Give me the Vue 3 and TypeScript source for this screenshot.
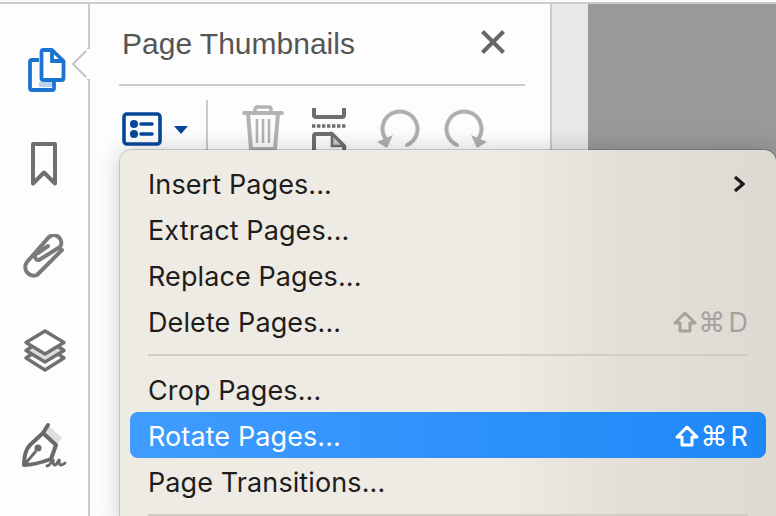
<script setup lang="ts">
interface MenuItem {
  label: string
  keyName?: string
  disabled?: boolean
  active?: boolean
  submenu?: boolean
}
const groupOne: MenuItem[] = [
  { label: 'Insert Pages...', submenu: true },
  { label: 'Extract Pages...' },
  { label: 'Replace Pages...' },
  { label: 'Delete Pages...', keyName: 'D', disabled: true },
]
const groupTwo: MenuItem[] = [
  { label: 'Crop Pages...' },
  { label: 'Rotate Pages...', keyName: 'R', active: true },
  { label: 'Page Transitions...' },
]
const groups = [groupOne, groupTwo]
</script>

<template>
  <div class="frame">
    <aside class="rail">
      <svg class="rail-icon" viewBox="0 0 48 48">
        <rect x="18" y="36" width="14" height="5" fill="#bcd2ec" />
        <path d="M18 14H11a2 2 0 0 0-2 2V42a2 2 0 0 0 2 2H31a2 2 0 0 0 2-2V36" fill="none" stroke="#1b74d0" stroke-width="3.8" stroke-linejoin="round" />
        <path d="M20.500 6a2 2 0 0 1 2-2H31L42.500 15V32a2 2 0 0 1-2 2H22.500a2 2 0 0 1-2-2Z" fill="#fff" stroke="#1b74d0" stroke-width="3.8" stroke-linejoin="round" />
        <path d="M31 4V15H42.500" fill="none" stroke="#1b74d0" stroke-width="3.800" />
      </svg>
      <svg class="rail-icon" viewBox="0 0 48 48">
        <path d="M12 4H34V43.500L23 32.500L12 43.500Z" fill="none" stroke="#707070" stroke-width="4" stroke-linejoin="round" />
      </svg>
      <svg class="rail-icon" viewBox="0 0 48 48">
        <path transform="translate(1 -3)" d="M40 19L15 44A8.500 8.500 0 0 1 5 31L27 6A7.500 7.500 0 0 1 38 16L17 29A3.500 3.500 0 0 1 16 22L26 15" fill="none" stroke="#7a7a7a" stroke-width="4" stroke-linecap="round" />
      </svg>
      <svg class="rail-icon" viewBox="0 0 48 48">
        <path d="M11 18.500L5 22.500L24 34L43 22.500L37 18.500L24 26Z" fill="#dcdcdc" />
        <path d="M11 26L5 30L24 42L43 30L37 26" fill="none" stroke="#707070" stroke-width="3.400" stroke-linejoin="round" />
        <path d="M11 18.500L5 22.500L24 34L43 22.500L37 18.500" fill="none" stroke="#707070" stroke-width="3.400" stroke-linejoin="round" />
        <path d="M24 3L43 14.500L24 26L5 14.500Z" fill="#fff" stroke="#707070" stroke-width="3.400" stroke-linejoin="round" />
      </svg>
      <svg class="rail-icon" viewBox="0 0 48 48">
        <path d="M27 3L41 16L35 23L22 11Z" fill="#dedede" />
        <path d="M3 43C3 35 5 27 9 23L22 11L35 23L30 37C22 40 12 43 3 43Z" fill="none" stroke="#6a6a6a" stroke-width="4" stroke-linejoin="round" />
        <path d="M22 11L27 3" stroke="#6a6a6a" stroke-width="4" stroke-linecap="round" />
        <path d="M4 42L15 29" stroke="#6a6a6a" stroke-width="2.800" />
        <circle cx="17" cy="26" r="3.500" fill="#6a6a6a" />
        <path d="M26 44C29 44 31 38 32 38C33 38 31 43 34 43C36 43 37 38 38 38C39 38 37 43 40 43C42 43 43 42 44 41" fill="none" stroke="#6a6a6a" stroke-width="2.800" stroke-linecap="round" />
      </svg>
      <svg class="notch" viewBox="0 0 20 36">
        <path d="M19 0L3 16L19 32" fill="#fdfdfd" stroke="#c4c4c4" stroke-width="2" />
        <path d="M18 1V31" stroke="#fdfdfd" stroke-width="4" />
      </svg>
    </aside>

    <section class="panel">
      <header class="panel-head">
        <h1 class="panel-title">Page Thumbnails</h1>
        <svg class="close" viewBox="0 0 26 26">
          <path d="M2.500 2.500L23.500 23.500M23.500 2.500L2.500 23.500" stroke="#666" stroke-width="4" />
        </svg>
      </header>
      <div class="tools">
        <svg class="tool list" viewBox="0 0 42 36">
          <rect x="3" y="3" width="36" height="30" rx="3" fill="none" stroke="#07479a" stroke-width="3.600" />
          <circle cx="13" cy="13" r="4" fill="#07479a" />
          <circle cx="13" cy="23" r="4" fill="#07479a" />
          <path d="M20 13H31M20 23H31" stroke="#07479a" stroke-width="3.600" stroke-linecap="round" />
        </svg>
        <svg class="tool caret" viewBox="0 0 14 8">
          <path d="M0 0H14L7 8Z" fill="#07479a" />
        </svg>
        <span class="tool-divider"></span>
        <svg class="tool trash" viewBox="0 0 42 48">
          <path d="M2 8H40" stroke="#b3b3b3" stroke-width="3.800" stroke-linecap="round" />
          <path d="M13 8V4a2 2 0 0 1 2-2H27a2 2 0 0 1 2 2V8" fill="none" stroke="#b3b3b3" stroke-width="3.400" />
          <path d="M6 8L9 44H33L36 8" fill="none" stroke="#b3b3b3" stroke-width="4" />
          <path d="M15 14V38M21 14V38M27 14V38" stroke="#b3b3b3" stroke-width="2.600" />
        </svg>
        <svg class="tool extract" viewBox="0 0 36 48">
          <path d="M2 0V7a2 2 0 0 0 2 2H30a2 2 0 0 0 2-2V0" fill="none" stroke="#6e6e6e" stroke-width="4" />
          <path d="M0 18H34" stroke="#6e6e6e" stroke-width="3.400" stroke-dasharray="3.400 1.600" />
          <path d="M2 48V28a2 2 0 0 1 2-2H20L32 38V48" fill="none" stroke="#6e6e6e" stroke-width="4" />
          <path d="M20 26V38H32Z" fill="#c9c9c9" stroke="#6e6e6e" stroke-width="2.600" />
        </svg>
        <svg class="tool rotate" viewBox="0 0 44 48">
          <path d="M30 37A17.500 17.500 0 1 0 8 30" fill="none" stroke="#afafaf" stroke-width="4" stroke-linecap="round" />
          <path d="M0 34L16 27L10 40Z" fill="#afafaf" />
        </svg>
        <svg class="tool rotate mirrored" viewBox="0 0 44 48">
          <path d="M30 37A17.500 17.500 0 1 0 8 30" fill="none" stroke="#afafaf" stroke-width="4" stroke-linecap="round" />
          <path d="M0 34L16 27L10 40Z" fill="#afafaf" />
        </svg>
      </div>
    </section>

    <div class="gutter"></div>
    <div class="canvas"></div>

    <nav class="menu">
      <template v-for="(group, g) in groups" :key="g">
        <div v-if="g > 0" class="sep"></div>
        <div
          v-for="item in group"
          :key="item.label"
          class="row"
          :class="{ active: item.active, lower: g > 0 }"
        >
          <span>{{ item.label }}</span>
          <span v-if="item.keyName" class="shortcut" :class="{ muted: item.disabled }">
            <svg class="shift" viewBox="0 0 24 22">
              <path d="M12 2L22 12H17V20H7V12H2Z" fill="none" stroke="currentColor" stroke-width="3" stroke-linejoin="round" />
            </svg>
            <span class="cmd">⌘</span>
            <span>{{ item.keyName }}</span>
          </span>
          <svg v-if="item.submenu" class="chevron" viewBox="0 0 12 18">
            <path d="M2 2L10 9L2 16" fill="none" stroke="#1d1b19" stroke-width="3.200" />
          </svg>
        </div>
      </template>
      <div class="sep last"></div>
    </nav>
  </div>
</template>

<style>
html, body {
  margin: 0;
  overflow: hidden;
  background: #fff;
}
</style>

<style scoped>
.frame {
  position: relative;
  display: flex;
  width: 776px;
  height: 516px;
  box-sizing: border-box;
  overflow: hidden;
  padding-top: 4px;
  background: #fdfdfd;
  font-family: "Liberation Sans", Arial, sans-serif;
}
.frame::before {
  content: "";
  position: absolute;
  left: 0;
  right: 0;
  top: 2px;
  height: 2px;
  background: #cbcbcb;
}
.rail {
  position: relative;
  flex: 0 0 90px;
  display: flex;
  flex-direction: column;
  gap: 46px;
  padding: 42px 0 0 21px;
  box-sizing: border-box;
  border-right: 2px solid #cbcbcb;
  background: #fdfdfd;
}
.rail-icon {
  width: 48px;
  height: 48px;
  flex: none;
}
.notch {
  position: absolute;
  right: -2px;
  top: 44px;
  width: 20px;
  height: 36px;
}
.panel {
  flex: 0 0 460px;
  box-sizing: border-box;
  padding: 0 25px 0 29px;
  background: #fdfdfd;
}
.panel-head {
  display: flex;
  align-items: center;
  justify-content: space-between;
  height: 80px;
  padding: 0 19px 0 3px;
  border-bottom: 2px solid #cbcbcb;
}
.panel-title {
  margin: 0;
  font-size: 30px;
  font-weight: 400;
  color: #555;
  white-space: nowrap;
}
.close {
  width: 26px;
  height: 26px;
  margin-bottom: 4px;
}
.tools {
  display: flex;
  align-items: flex-start;
  padding-top: 14px;
}
.tool {
  flex: none;
}
.list {
  width: 42px;
  height: 36px;
  margin: 11px 0 0 2px;
}
.caret {
  width: 14px;
  height: 8px;
  margin: 26px 0 0 11px;
}
.tool-divider {
  width: 2px;
  height: 50px;
  margin-left: 18px;
  background: #cbcbcb;
}
.trash {
  width: 42px;
  height: 48px;
  margin: 5px 0 0 34px;
}
.extract {
  width: 36px;
  height: 48px;
  margin: 8px 0 0 28px;
}
.rotate {
  width: 44px;
  height: 48px;
  margin: 8px 0 0 29px;
}
.mirrored {
  margin-left: 22px;
  transform: scaleX(-1);
}
.gutter {
  flex: 0 0 38px;
  border-left: 2px solid #cbcbcb;
  box-sizing: border-box;
  background: #e9e9e9;
}
.canvas {
  flex: 1;
  background: #999;
}
.menu {
  position: absolute;
  left: 120px;
  top: 150px;
  width: 656px;
  box-sizing: border-box;
  padding-top: 11px;
  border-radius: 12px 12px 0 0;
  background: linear-gradient(90deg, #eeebe5 0%, #eeebe5 58%, #e3e0da 76%, #dddad4 100%);
  box-shadow: 0 0 0 1px rgba(0, 0, 0, 0.16), 0 0 24px rgba(0, 0, 0, 0.2);
  font-family: Inter, "Liberation Sans", sans-serif;
  font-size: 27px;
  letter-spacing: 0.1px;
  color: #1f1d1b;
}
.row {
  display: flex;
  align-items: center;
  justify-content: space-between;
  height: 46px;
  margin: 0 10px;
  padding: 0 18px;
  border-radius: 8px;
  white-space: nowrap;
}
.row.lower {
  box-sizing: border-box;
  padding-top: 2px;
}
.row.active {
  background: linear-gradient(90deg, #409cff, #1e88f7);
  color: #fff;
}
.shortcut {
  display: inline-flex;
  align-items: center;
  gap: 3px;
}
.shortcut.muted {
  color: #a5a29c;
}
.shift {
  width: 24px;
  height: 22px;
  margin-right: -2px;
}
.cmd {
  font-family: "DejaVu Sans", sans-serif;
  font-size: 27px;
}
.chevron {
  width: 12px;
  height: 18px;
  margin-right: 3px;
}
.sep {
  height: 2px;
  margin: 9px 28px 10px;
  background: #d0cdc7;
}
.sep.last {
  margin-top: 10px;
}
</style>
